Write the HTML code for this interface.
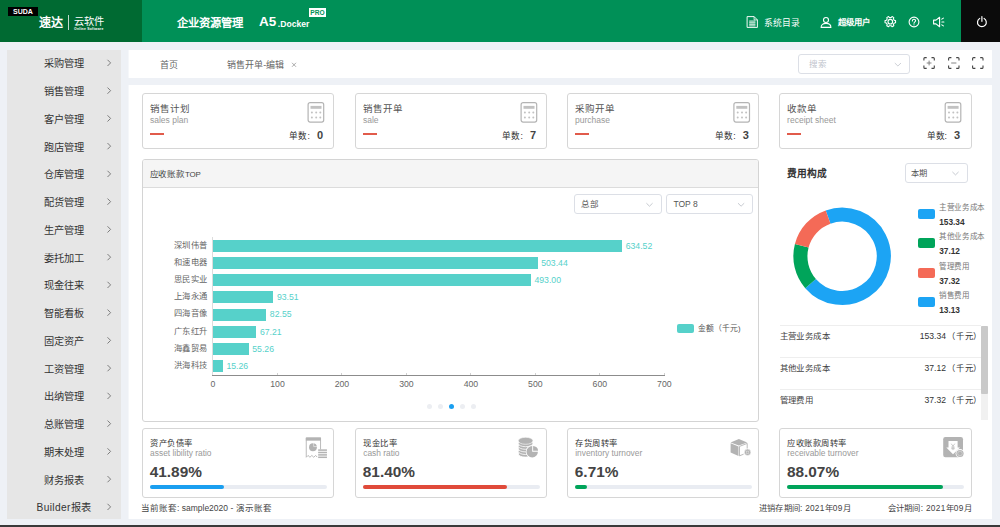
<!DOCTYPE html><html lang="zh-CN"><head><meta charset="utf-8"><title>ERP</title>
<style>html,body{margin:0;padding:0}body{width:1000px;height:527px;position:relative;overflow:hidden;background:#eef1f6;font-family:"Liberation Sans", sans-serif;}div{box-sizing:border-box}</style></head><body>
<div style="position:absolute;left:0.00px;top:0.00px;width:1000.00px;height:42.00px;background:#009057;"></div>
<div style="position:absolute;left:0.00px;top:0.00px;width:142.00px;height:42.00px;background:#006a32;"></div>
<div style="position:absolute;left:961.00px;top:0.00px;width:39.00px;height:42.00px;background:#0b0b0b;"></div>
<div style="position:absolute;left:8.00px;top:7.00px;width:30.00px;height:9.00px;background:#000;"></div>
<div style="position:absolute;top:6.70px;height:9.8px;line-height:9.8px;font-size:7px;color:#fff;white-space:nowrap;font-weight:bold;left:8.00px;width:30px;text-align:center;">SUDA</div>
<div style="position:absolute;top:14.80px;height:16.8px;line-height:16.8px;font-size:12px;color:#fff;white-space:nowrap;font-weight:bold;left:39.00px;">速达</div>
<div style="position:absolute;left:68.00px;top:15.00px;width:1.00px;height:15.00px;background:rgba(255,255,255,.75);"></div>
<div style="position:absolute;top:14.56px;height:14.28px;line-height:14.28px;font-size:10.2px;color:#fff;white-space:nowrap;left:74.00px;">云软件</div>
<div style="position:absolute;top:26.62px;height:4.76px;line-height:4.76px;font-size:3.4px;color:#fff;white-space:nowrap;font-weight:bold;left:74.00px;letter-spacing:.25px;">Online Software</div>
<div style="position:absolute;top:15.69px;height:15.82px;line-height:15.82px;font-size:11.3px;color:#fff;white-space:nowrap;font-weight:bold;left:176.50px;">企业资源管理</div>
<div style="position:absolute;top:13.15px;height:18.9px;line-height:18.9px;font-size:13.5px;color:#fff;white-space:nowrap;font-weight:bold;left:259.00px;">A5</div>
<div style="position:absolute;top:18.38px;height:12.04px;line-height:12.04px;font-size:8.6px;color:#fff;white-space:nowrap;font-weight:bold;left:277.80px;">.Docker</div>
<div style="position:absolute;left:309.00px;top:7.60px;width:17.00px;height:9.40px;background:#fff;"></div>
<div style="position:absolute;top:7.88px;height:9.24px;line-height:9.24px;font-size:6.6px;color:#009057;white-space:nowrap;font-weight:bold;left:309.00px;width:17px;text-align:center;">PRO</div>
<svg style="position:absolute;left:746px;top:16px;overflow:visible" width="13" height="13" viewBox="0 0 13 13"><g transform="translate(0.5 0)"><path d="M0.6 0.6 H7.6 L10.9 3.9 V11.4 H0.6 Z" stroke="#fff" fill="none" stroke-width="0.95" stroke-linejoin="round"/><path d="M7.6 0.6 V3.9 H10.9" stroke="#fff" fill="none" stroke-width="0.8"/><rect x="2.7" y="4.6" width="6.2" height="5.4" fill="rgba(255,255,255,.35)"/><path d="M2.7 5 H8.9 M2.7 6.7 H8.9 M2.7 8.4 H8.9 M2.7 10 H8.9" stroke="#fff" stroke-width="0.6"/></g></svg>
<div style="position:absolute;top:16.74px;height:12.32px;line-height:12.32px;font-size:8.8px;color:#fff;white-space:nowrap;left:764.00px;">系统目录</div>
<svg style="position:absolute;left:820px;top:17px;overflow:visible" width="12" height="12" viewBox="0 0 12 12"><g transform="translate(0.5 0)"><circle cx="5.5" cy="3" r="2.5" stroke="#fff" fill="none" stroke-width="1.1" stroke-linecap="round" stroke-linejoin="round"/><path d="M0.6 10.4 C0.6 7.6 2.6 6.4 5.5 6.4 C8.4 6.4 10.4 7.6 10.4 10.4 Z" stroke="#fff" fill="none" stroke-width="1.1" stroke-linecap="round" stroke-linejoin="round"/></g></svg>
<div style="position:absolute;top:17.02px;height:11.76px;line-height:11.76px;font-size:8.4px;color:#fff;white-space:nowrap;font-weight:bold;left:838.20px;">超级用户</div>
<svg style="position:absolute;left:884px;top:15px;overflow:visible" width="13" height="13" viewBox="0 0 13 13"><g transform="translate(0.45 0.8)"><path d="M6.64 1.78 L7.59 0.79 L9.36 1.81 L8.98 3.13 L9.77 4.50 L11.10 4.83 L11.10 6.87 L9.77 7.20 L8.98 8.57 L9.36 9.89 L7.59 10.91 L6.64 9.92 L5.06 9.92 L4.11 10.91 L2.34 9.89 L2.72 8.57 L1.93 7.20 L0.60 6.87 L0.60 4.83 L1.93 4.50 L2.72 3.13 L2.34 1.81 L4.11 0.79 L5.06 1.78 Z" stroke="#fff" fill="none" stroke-width="1.1" stroke-linecap="round" stroke-linejoin="round"/><circle cx="5.85" cy="5.85" r="2.3" stroke="#fff" fill="none" stroke-width="1.1" stroke-linecap="round" stroke-linejoin="round"/></g></svg>
<svg style="position:absolute;left:908px;top:16px;overflow:visible" width="12" height="12" viewBox="0 0 12 12"><g transform="translate(0.5 0.5)"><circle cx="5.5" cy="5.5" r="4.9" stroke="#fff" fill="none" stroke-width="1.1" stroke-linecap="round" stroke-linejoin="round"/><path d="M3.9 4.4 C3.9 3.3 4.6 2.8 5.5 2.8 C6.4 2.8 7.1 3.4 7.1 4.3 C7.1 5.4 5.5 5.5 5.5 6.8" stroke="#fff" fill="none" stroke-width="1.1" stroke-linecap="round" stroke-linejoin="round"/><circle cx="5.5" cy="8.3" r="0.6" fill="#fff"/></g></svg>
<svg style="position:absolute;left:933px;top:16px;overflow:visible" width="13" height="12" viewBox="0 0 13 12"><g transform="translate(0 0.5)"><path d="M0.6 3.6 H3 L6.6 0.8 V10.2 L3 7.4 H0.6 Z" stroke="#fff" fill="none" stroke-width="1.1" stroke-linecap="round" stroke-linejoin="round"/><path d="M8.8 2.6 L10.4 1.6 M8.9 5.5 H10.9 M8.8 8.4 L10.4 9.4" stroke="#fff" fill="none" stroke-width="1.1" stroke-linecap="round" stroke-linejoin="round"/></g></svg>
<svg style="position:absolute;left:976px;top:15px;overflow:visible" width="12" height="12" viewBox="0 0 12 12"><g transform="translate(0.4 0.9)"><path d="M3.3 2.6 A4.4 4.4 0 1 0 7.7 2.6" stroke="#fff" fill="none" stroke-width="1.2" stroke-linecap="round"/><path d="M5.5 0.8 V5.4" stroke="#fff" stroke-width="1.2" stroke-linecap="round"/></g></svg>
<div style="position:absolute;left:7.00px;top:50.00px;width:114.00px;height:469.00px;background:#e6e6e6;"></div>
<div style="position:absolute;top:57.36px;height:14.28px;line-height:14.28px;font-size:10.2px;color:#333;white-space:nowrap;left:9.00px;width:110px;text-align:center;">采购管理</div>
<svg style="position:absolute;left:106px;top:59px;overflow:visible" width="6" height="9" viewBox="0 0 6 9"><g transform="translate(0.9 0.2)"><path d="M0.6 0.6 L3.7 3.7 L0.6 6.8" stroke="#777" fill="none" stroke-width="0.95"/></g></svg>
<div style="position:absolute;top:85.11px;height:14.28px;line-height:14.28px;font-size:10.2px;color:#333;white-space:nowrap;left:9.00px;width:110px;text-align:center;">销售管理</div>
<svg style="position:absolute;left:106px;top:86px;overflow:visible" width="6" height="9" viewBox="0 0 6 9"><g transform="translate(0.9 0.95)"><path d="M0.6 0.6 L3.7 3.7 L0.6 6.8" stroke="#777" fill="none" stroke-width="0.95"/></g></svg>
<div style="position:absolute;top:112.86px;height:14.28px;line-height:14.28px;font-size:10.2px;color:#333;white-space:nowrap;left:9.00px;width:110px;text-align:center;">客户管理</div>
<svg style="position:absolute;left:106px;top:114px;overflow:visible" width="6" height="9" viewBox="0 0 6 9"><g transform="translate(0.9 0.7)"><path d="M0.6 0.6 L3.7 3.7 L0.6 6.8" stroke="#777" fill="none" stroke-width="0.95"/></g></svg>
<div style="position:absolute;top:140.61px;height:14.28px;line-height:14.28px;font-size:10.2px;color:#333;white-space:nowrap;left:9.00px;width:110px;text-align:center;">跑店管理</div>
<svg style="position:absolute;left:106px;top:142px;overflow:visible" width="6" height="9" viewBox="0 0 6 9"><g transform="translate(0.9 0.45)"><path d="M0.6 0.6 L3.7 3.7 L0.6 6.8" stroke="#777" fill="none" stroke-width="0.95"/></g></svg>
<div style="position:absolute;top:168.36px;height:14.28px;line-height:14.28px;font-size:10.2px;color:#333;white-space:nowrap;left:9.00px;width:110px;text-align:center;">仓库管理</div>
<svg style="position:absolute;left:106px;top:170px;overflow:visible" width="6" height="9" viewBox="0 0 6 9"><g transform="translate(0.9 0.2)"><path d="M0.6 0.6 L3.7 3.7 L0.6 6.8" stroke="#777" fill="none" stroke-width="0.95"/></g></svg>
<div style="position:absolute;top:196.11px;height:14.28px;line-height:14.28px;font-size:10.2px;color:#333;white-space:nowrap;left:9.00px;width:110px;text-align:center;">配货管理</div>
<svg style="position:absolute;left:106px;top:197px;overflow:visible" width="6" height="9" viewBox="0 0 6 9"><g transform="translate(0.9 0.95)"><path d="M0.6 0.6 L3.7 3.7 L0.6 6.8" stroke="#777" fill="none" stroke-width="0.95"/></g></svg>
<div style="position:absolute;top:223.86px;height:14.28px;line-height:14.28px;font-size:10.2px;color:#333;white-space:nowrap;left:9.00px;width:110px;text-align:center;">生产管理</div>
<svg style="position:absolute;left:106px;top:225px;overflow:visible" width="6" height="9" viewBox="0 0 6 9"><g transform="translate(0.9 0.7)"><path d="M0.6 0.6 L3.7 3.7 L0.6 6.8" stroke="#777" fill="none" stroke-width="0.95"/></g></svg>
<div style="position:absolute;top:251.61px;height:14.28px;line-height:14.28px;font-size:10.2px;color:#333;white-space:nowrap;left:9.00px;width:110px;text-align:center;">委托加工</div>
<svg style="position:absolute;left:106px;top:253px;overflow:visible" width="6" height="9" viewBox="0 0 6 9"><g transform="translate(0.9 0.45)"><path d="M0.6 0.6 L3.7 3.7 L0.6 6.8" stroke="#777" fill="none" stroke-width="0.95"/></g></svg>
<div style="position:absolute;top:279.36px;height:14.28px;line-height:14.28px;font-size:10.2px;color:#333;white-space:nowrap;left:9.00px;width:110px;text-align:center;">现金往来</div>
<svg style="position:absolute;left:106px;top:281px;overflow:visible" width="6" height="9" viewBox="0 0 6 9"><g transform="translate(0.9 0.2)"><path d="M0.6 0.6 L3.7 3.7 L0.6 6.8" stroke="#777" fill="none" stroke-width="0.95"/></g></svg>
<div style="position:absolute;top:307.11px;height:14.28px;line-height:14.28px;font-size:10.2px;color:#333;white-space:nowrap;left:9.00px;width:110px;text-align:center;">智能看板</div>
<svg style="position:absolute;left:106px;top:308px;overflow:visible" width="6" height="9" viewBox="0 0 6 9"><g transform="translate(0.9 0.95)"><path d="M0.6 0.6 L3.7 3.7 L0.6 6.8" stroke="#777" fill="none" stroke-width="0.95"/></g></svg>
<div style="position:absolute;top:334.86px;height:14.28px;line-height:14.28px;font-size:10.2px;color:#333;white-space:nowrap;left:9.00px;width:110px;text-align:center;">固定资产</div>
<svg style="position:absolute;left:106px;top:336px;overflow:visible" width="6" height="9" viewBox="0 0 6 9"><g transform="translate(0.9 0.7)"><path d="M0.6 0.6 L3.7 3.7 L0.6 6.8" stroke="#777" fill="none" stroke-width="0.95"/></g></svg>
<div style="position:absolute;top:362.61px;height:14.28px;line-height:14.28px;font-size:10.2px;color:#333;white-space:nowrap;left:9.00px;width:110px;text-align:center;">工资管理</div>
<svg style="position:absolute;left:106px;top:364px;overflow:visible" width="6" height="9" viewBox="0 0 6 9"><g transform="translate(0.9 0.45)"><path d="M0.6 0.6 L3.7 3.7 L0.6 6.8" stroke="#777" fill="none" stroke-width="0.95"/></g></svg>
<div style="position:absolute;top:390.36px;height:14.28px;line-height:14.28px;font-size:10.2px;color:#333;white-space:nowrap;left:9.00px;width:110px;text-align:center;">出纳管理</div>
<svg style="position:absolute;left:106px;top:392px;overflow:visible" width="6" height="9" viewBox="0 0 6 9"><g transform="translate(0.9 0.2)"><path d="M0.6 0.6 L3.7 3.7 L0.6 6.8" stroke="#777" fill="none" stroke-width="0.95"/></g></svg>
<div style="position:absolute;top:418.11px;height:14.28px;line-height:14.28px;font-size:10.2px;color:#333;white-space:nowrap;left:9.00px;width:110px;text-align:center;">总账管理</div>
<svg style="position:absolute;left:106px;top:419px;overflow:visible" width="6" height="9" viewBox="0 0 6 9"><g transform="translate(0.9 0.95)"><path d="M0.6 0.6 L3.7 3.7 L0.6 6.8" stroke="#777" fill="none" stroke-width="0.95"/></g></svg>
<div style="position:absolute;top:445.86px;height:14.28px;line-height:14.28px;font-size:10.2px;color:#333;white-space:nowrap;left:9.00px;width:110px;text-align:center;">期末处理</div>
<svg style="position:absolute;left:106px;top:447px;overflow:visible" width="6" height="9" viewBox="0 0 6 9"><g transform="translate(0.9 0.7)"><path d="M0.6 0.6 L3.7 3.7 L0.6 6.8" stroke="#777" fill="none" stroke-width="0.95"/></g></svg>
<div style="position:absolute;top:473.61px;height:14.28px;line-height:14.28px;font-size:10.2px;color:#333;white-space:nowrap;left:9.00px;width:110px;text-align:center;">财务报表</div>
<svg style="position:absolute;left:106px;top:475px;overflow:visible" width="6" height="9" viewBox="0 0 6 9"><g transform="translate(0.9 0.45)"><path d="M0.6 0.6 L3.7 3.7 L0.6 6.8" stroke="#777" fill="none" stroke-width="0.95"/></g></svg>
<div style="position:absolute;top:501.36px;height:14.28px;line-height:14.28px;font-size:10.2px;color:#333;white-space:nowrap;left:9.00px;width:110px;text-align:center;letter-spacing:.35px;">Builder报表</div>
<svg style="position:absolute;left:106px;top:503px;overflow:visible" width="6" height="9" viewBox="0 0 6 9"><g transform="translate(0.9 0.2)"><path d="M0.6 0.6 L3.7 3.7 L0.6 6.8" stroke="#777" fill="none" stroke-width="0.95"/></g></svg>
<div style="position:absolute;left:128.00px;top:50.00px;width:1.00px;height:28.00px;background:#f5f7fa;"></div>
<div style="position:absolute;left:129.00px;top:50.00px;width:863.00px;height:28.00px;background:#fff;"></div>
<div style="position:absolute;top:59.30px;height:12.6px;line-height:12.6px;font-size:9px;color:#666;white-space:nowrap;left:160.00px;">首页</div>
<div style="position:absolute;top:59.30px;height:12.6px;line-height:12.6px;font-size:9px;color:#666;white-space:nowrap;left:227.30px;">销售开单-编辑</div>
<svg style="position:absolute;left:291px;top:62px;overflow:visible" width="6" height="6" viewBox="0 0 6 6"><g transform="translate(0.5 0.3)"><path d="M0.5 0.5 L4.5 4.5 M4.5 0.5 L0.5 4.5" stroke="#888" stroke-width="0.7" fill="none"/></g></svg>
<div style="position:absolute;left:798.00px;top:54.00px;width:112.00px;height:20.00px;background:#fff;border:1px solid #dcdfe6;border-radius:3px;"></div>
<div style="position:absolute;top:58.85px;height:11.9px;line-height:11.9px;font-size:8.5px;color:#c0c4cc;white-space:nowrap;left:808.50px;">搜索</div>
<svg style="position:absolute;left:894px;top:62px;overflow:visible" width="8" height="5" viewBox="0 0 8 5"><g transform="translate(0.4 0.6)"><path d="M0.4 0.4 L3.5 3.4 L6.6 0.4" stroke="#c0c4cc" fill="none" stroke-width="0.8"/></g></svg>
<svg style="position:absolute;left:923px;top:57px;overflow:visible" width="13" height="13" viewBox="0 0 13 13"><g transform="translate(0.3 0)"><path d="M0.6 3.4 V1.6 Q0.6 0.6 1.6 0.6 H3.4 M8.2 0.6 H10 Q11 0.6 11 1.6 V3.4 M11 8.6 V10.4 Q11 11.4 10 11.4 H8.2 M3.4 11.4 H1.6 Q0.6 11.4 0.6 10.4 V8.6" stroke="#444" fill="none" stroke-width="1.1"/><path d="M3.4 6 H8.2 M5.8 3.6 V8.4" stroke="#777" fill="none" stroke-width="0.9"/></g></svg>
<svg style="position:absolute;left:948px;top:57px;overflow:visible" width="13" height="13" viewBox="0 0 13 13"><g transform="translate(0 0)"><path d="M0.6 3.4 V1.6 Q0.6 0.6 1.6 0.6 H3.4 M8.2 0.6 H10 Q11 0.6 11 1.6 V3.4 M11 8.6 V10.4 Q11 11.4 10 11.4 H8.2 M3.4 11.4 H1.6 Q0.6 11.4 0.6 10.4 V8.6" stroke="#444" fill="none" stroke-width="1.1"/><path d="M3.2 6 H8.4" stroke="#777" fill="none" stroke-width="0.9"/></g></svg>
<svg style="position:absolute;left:972px;top:57px;overflow:visible" width="13" height="13" viewBox="0 0 13 13"><g transform="translate(0 0)"><path d="M0.6 3.4 V1.6 Q0.6 0.6 1.6 0.6 H3.4 M8.2 0.6 H10 Q11 0.6 11 1.6 V3.4 M11 8.6 V10.4 Q11 11.4 10 11.4 H8.2 M3.4 11.4 H1.6 Q0.6 11.4 0.6 10.4 V8.6" stroke="#444" fill="none" stroke-width="1.1"/></g></svg>
<div style="position:absolute;left:128.00px;top:85.00px;width:1.00px;height:434.00px;background:#f5f7fa;"></div>
<div style="position:absolute;left:129.00px;top:85.00px;width:863.00px;height:434.00px;background:#fff;"></div>
<div style="position:absolute;left:142.00px;top:93.00px;width:192.00px;height:56.00px;background:#fff;border:1px solid #d6d6d6;border-radius:3px;"></div>
<div style="position:absolute;top:101.85px;height:13.3px;line-height:13.3px;font-size:9.5px;color:#555;white-space:nowrap;left:150.00px;">销售计划</div>
<div style="position:absolute;top:115.25px;height:11.9px;line-height:11.9px;font-size:8.5px;color:#999;white-space:nowrap;left:150.00px;">sales plan</div>
<div style="position:absolute;left:150.00px;top:133.00px;width:14.00px;height:2.00px;background:#e15b4b;"></div>
<svg style="position:absolute;left:307px;top:102px;overflow:visible" width="18" height="22" viewBox="0 0 18 22"><g transform="translate(0.5 0.1)"><rect x="0.6" y="0.6" width="15.6" height="19.4" rx="2" fill="#fff" stroke="#b4b4b4" stroke-width="1.2"/><rect x="3" y="3.8" width="11" height="2.9" fill="#c2c2c2"/><circle cx="4.4" cy="10.5" r="1" fill="#c2c2c2"/><circle cx="4.4" cy="15.4" r="1" fill="#c2c2c2"/><circle cx="8.7" cy="10.5" r="1" fill="#c2c2c2"/><circle cx="8.7" cy="15.4" r="1" fill="#c2c2c2"/><circle cx="12.8" cy="10.5" r="1" fill="#c2c2c2"/><circle cx="12.8" cy="15.4" r="1" fill="#c2c2c2"/></g></svg>
<div style="position:absolute;top:130.38px;height:12.04px;line-height:12.04px;font-size:8.6px;color:#333;white-space:nowrap;right:690.20px;text-align:right;">单数:</div>
<div style="position:absolute;top:128.20px;height:15.4px;line-height:15.4px;font-size:11px;color:#444;white-space:nowrap;font-weight:bold;left:317.00px;">0</div>
<div style="position:absolute;left:355.00px;top:93.00px;width:192.00px;height:56.00px;background:#fff;border:1px solid #d6d6d6;border-radius:3px;"></div>
<div style="position:absolute;top:101.85px;height:13.3px;line-height:13.3px;font-size:9.5px;color:#555;white-space:nowrap;left:363.00px;">销售开单</div>
<div style="position:absolute;top:115.25px;height:11.9px;line-height:11.9px;font-size:8.5px;color:#999;white-space:nowrap;left:363.00px;">sale</div>
<div style="position:absolute;left:363.00px;top:133.00px;width:14.00px;height:2.00px;background:#e15b4b;"></div>
<svg style="position:absolute;left:520px;top:102px;overflow:visible" width="18" height="22" viewBox="0 0 18 22"><g transform="translate(0.5 0.1)"><rect x="0.6" y="0.6" width="15.6" height="19.4" rx="2" fill="#fff" stroke="#b4b4b4" stroke-width="1.2"/><rect x="3" y="3.8" width="11" height="2.9" fill="#c2c2c2"/><circle cx="4.4" cy="10.5" r="1" fill="#c2c2c2"/><circle cx="4.4" cy="15.4" r="1" fill="#c2c2c2"/><circle cx="8.7" cy="10.5" r="1" fill="#c2c2c2"/><circle cx="8.7" cy="15.4" r="1" fill="#c2c2c2"/><circle cx="12.8" cy="10.5" r="1" fill="#c2c2c2"/><circle cx="12.8" cy="15.4" r="1" fill="#c2c2c2"/></g></svg>
<div style="position:absolute;top:130.38px;height:12.04px;line-height:12.04px;font-size:8.6px;color:#333;white-space:nowrap;right:477.20px;text-align:right;">单数:</div>
<div style="position:absolute;top:128.20px;height:15.4px;line-height:15.4px;font-size:11px;color:#444;white-space:nowrap;font-weight:bold;left:530.00px;">7</div>
<div style="position:absolute;left:567.00px;top:93.00px;width:192.00px;height:56.00px;background:#fff;border:1px solid #d6d6d6;border-radius:3px;"></div>
<div style="position:absolute;top:101.85px;height:13.3px;line-height:13.3px;font-size:9.5px;color:#555;white-space:nowrap;left:575.00px;">采购开单</div>
<div style="position:absolute;top:115.25px;height:11.9px;line-height:11.9px;font-size:8.5px;color:#999;white-space:nowrap;left:575.00px;">purchase</div>
<div style="position:absolute;left:575.00px;top:133.00px;width:14.00px;height:2.00px;background:#e15b4b;"></div>
<svg style="position:absolute;left:733px;top:102px;overflow:visible" width="18" height="22" viewBox="0 0 18 22"><g transform="translate(0.3 0.1)"><rect x="0.6" y="0.6" width="15.6" height="19.4" rx="2" fill="#fff" stroke="#b4b4b4" stroke-width="1.2"/><rect x="3" y="3.8" width="11" height="2.9" fill="#c2c2c2"/><circle cx="4.4" cy="10.5" r="1" fill="#c2c2c2"/><circle cx="4.4" cy="15.4" r="1" fill="#c2c2c2"/><circle cx="8.7" cy="10.5" r="1" fill="#c2c2c2"/><circle cx="8.7" cy="15.4" r="1" fill="#c2c2c2"/><circle cx="12.8" cy="10.5" r="1" fill="#c2c2c2"/><circle cx="12.8" cy="15.4" r="1" fill="#c2c2c2"/></g></svg>
<div style="position:absolute;top:130.38px;height:12.04px;line-height:12.04px;font-size:8.6px;color:#333;white-space:nowrap;right:264.40px;text-align:right;">单数:</div>
<div style="position:absolute;top:128.20px;height:15.4px;line-height:15.4px;font-size:11px;color:#444;white-space:nowrap;font-weight:bold;left:742.80px;">3</div>
<div style="position:absolute;left:779.00px;top:93.00px;width:193.00px;height:56.00px;background:#fff;border:1px solid #d6d6d6;border-radius:3px;"></div>
<div style="position:absolute;top:101.85px;height:13.3px;line-height:13.3px;font-size:9.5px;color:#555;white-space:nowrap;left:787.10px;">收款单</div>
<div style="position:absolute;top:115.25px;height:11.9px;line-height:11.9px;font-size:8.5px;color:#999;white-space:nowrap;left:787.10px;">receipt sheet</div>
<div style="position:absolute;left:787.00px;top:133.00px;width:14.00px;height:2.00px;background:#e15b4b;"></div>
<svg style="position:absolute;left:944px;top:102px;overflow:visible" width="18" height="22" viewBox="0 0 18 22"><g transform="translate(0.6 0.1)"><rect x="0.6" y="0.6" width="15.6" height="19.4" rx="2" fill="#fff" stroke="#b4b4b4" stroke-width="1.2"/><rect x="3" y="3.8" width="11" height="2.9" fill="#c2c2c2"/><circle cx="4.4" cy="10.5" r="1" fill="#c2c2c2"/><circle cx="4.4" cy="15.4" r="1" fill="#c2c2c2"/><circle cx="8.7" cy="10.5" r="1" fill="#c2c2c2"/><circle cx="8.7" cy="15.4" r="1" fill="#c2c2c2"/><circle cx="12.8" cy="10.5" r="1" fill="#c2c2c2"/><circle cx="12.8" cy="15.4" r="1" fill="#c2c2c2"/></g></svg>
<div style="position:absolute;top:130.38px;height:12.04px;line-height:12.04px;font-size:8.6px;color:#333;white-space:nowrap;right:53.10px;text-align:right;">单数:</div>
<div style="position:absolute;top:128.20px;height:15.4px;line-height:15.4px;font-size:11px;color:#444;white-space:nowrap;font-weight:bold;left:954.10px;">3</div>
<div style="position:absolute;left:142.00px;top:159.00px;width:617.00px;height:263.00px;background:#fff;border:1px solid #d4d4d4;border-radius:3px;"></div>
<div style="position:absolute;left:143.00px;top:160.00px;width:615.00px;height:28.00px;background:#f5f5f5;border-bottom:1px solid #dcdcdc;border-radius:2px 2px 0 0;"></div>
<div style="position:absolute;top:168.65px;height:11.9px;line-height:11.9px;font-size:8.5px;color:#444;white-space:nowrap;left:149.60px;letter-spacing:-.15px;">应收账款<span style="font-size:7.9px;letter-spacing:-.2px">TOP</span></div>
<div style="position:absolute;left:574.00px;top:194.00px;width:88.00px;height:20.00px;background:#fff;border:1px solid #dcdfe6;border-radius:3px;"></div>
<div style="position:absolute;top:198.85px;height:11.9px;line-height:11.9px;font-size:8.5px;color:#555;white-space:nowrap;left:580.60px;">总部</div>
<svg style="position:absolute;left:646px;top:202px;overflow:visible" width="8" height="5" viewBox="0 0 8 5"><g transform="translate(0 0.8)"><path d="M0.4 0.4 L3.5 3.4 L6.6 0.4" stroke="#b8bcc4" fill="none" stroke-width="0.8"/></g></svg>
<div style="position:absolute;left:666.00px;top:194.00px;width:87.00px;height:20.00px;background:#fff;border:1px solid #dcdfe6;border-radius:3px;"></div>
<div style="position:absolute;top:198.85px;height:11.9px;line-height:11.9px;font-size:8.5px;color:#555;white-space:nowrap;left:673.40px;">TOP 8</div>
<svg style="position:absolute;left:737px;top:202px;overflow:visible" width="8" height="5" viewBox="0 0 8 5"><g transform="translate(0.6 0.8)"><path d="M0.4 0.4 L3.5 3.4 L6.6 0.4" stroke="#b8bcc4" fill="none" stroke-width="0.8"/></g></svg>
<div style="position:absolute;left:213.00px;top:239.70px;width:409.08px;height:12.00px;background:#56d1ca;"></div>
<div style="position:absolute;top:239.69px;height:11.62px;line-height:11.62px;font-size:8.3px;color:#666;white-space:nowrap;right:792.50px;text-align:right;letter-spacing:.35px;">深圳伟普</div>
<div style="position:absolute;top:239.61px;height:12.18px;line-height:12.18px;font-size:8.7px;color:#56d1ca;white-space:nowrap;left:625.68px;">634.52</div>
<div style="position:absolute;left:213.00px;top:256.90px;width:324.57px;height:12.00px;background:#56d1ca;"></div>
<div style="position:absolute;top:256.89px;height:11.62px;line-height:11.62px;font-size:8.3px;color:#666;white-space:nowrap;right:792.50px;text-align:right;letter-spacing:.35px;">和速电器</div>
<div style="position:absolute;top:256.81px;height:12.18px;line-height:12.18px;font-size:8.7px;color:#56d1ca;white-space:nowrap;left:541.17px;">503.44</div>
<div style="position:absolute;left:213.00px;top:274.10px;width:317.84px;height:12.00px;background:#56d1ca;"></div>
<div style="position:absolute;top:274.09px;height:11.62px;line-height:11.62px;font-size:8.3px;color:#666;white-space:nowrap;right:792.50px;text-align:right;letter-spacing:.35px;">思民实业</div>
<div style="position:absolute;top:274.01px;height:12.18px;line-height:12.18px;font-size:8.7px;color:#56d1ca;white-space:nowrap;left:534.44px;">493.00</div>
<div style="position:absolute;left:213.00px;top:291.30px;width:60.29px;height:12.00px;background:#56d1ca;"></div>
<div style="position:absolute;top:291.29px;height:11.62px;line-height:11.62px;font-size:8.3px;color:#666;white-space:nowrap;right:792.50px;text-align:right;letter-spacing:.35px;">上海永通</div>
<div style="position:absolute;top:291.21px;height:12.18px;line-height:12.18px;font-size:8.7px;color:#56d1ca;white-space:nowrap;left:276.89px;">93.51</div>
<div style="position:absolute;left:213.00px;top:308.50px;width:53.22px;height:12.00px;background:#56d1ca;"></div>
<div style="position:absolute;top:308.49px;height:11.62px;line-height:11.62px;font-size:8.3px;color:#666;white-space:nowrap;right:792.50px;text-align:right;letter-spacing:.35px;">四海音像</div>
<div style="position:absolute;top:308.41px;height:12.18px;line-height:12.18px;font-size:8.7px;color:#56d1ca;white-space:nowrap;left:269.82px;">82.55</div>
<div style="position:absolute;left:213.00px;top:325.70px;width:43.33px;height:12.00px;background:#56d1ca;"></div>
<div style="position:absolute;top:325.69px;height:11.62px;line-height:11.62px;font-size:8.3px;color:#666;white-space:nowrap;right:792.50px;text-align:right;letter-spacing:.35px;">广东红升</div>
<div style="position:absolute;top:325.61px;height:12.18px;line-height:12.18px;font-size:8.7px;color:#56d1ca;white-space:nowrap;left:259.93px;">67.21</div>
<div style="position:absolute;left:213.00px;top:342.90px;width:35.63px;height:12.00px;background:#56d1ca;"></div>
<div style="position:absolute;top:342.89px;height:11.62px;line-height:11.62px;font-size:8.3px;color:#666;white-space:nowrap;right:792.50px;text-align:right;letter-spacing:.35px;">海鑫贸易</div>
<div style="position:absolute;top:342.81px;height:12.18px;line-height:12.18px;font-size:8.7px;color:#56d1ca;white-space:nowrap;left:252.23px;">55.26</div>
<div style="position:absolute;left:213.00px;top:360.10px;width:9.84px;height:12.00px;background:#56d1ca;"></div>
<div style="position:absolute;top:360.09px;height:11.62px;line-height:11.62px;font-size:8.3px;color:#666;white-space:nowrap;right:792.50px;text-align:right;letter-spacing:.35px;">洪海科技</div>
<div style="position:absolute;top:360.01px;height:12.18px;line-height:12.18px;font-size:8.7px;color:#56d1ca;white-space:nowrap;left:226.44px;">15.26</div>
<div style="position:absolute;left:212.00px;top:237.00px;width:1.00px;height:138.00px;background:#dcdcdc;"></div>
<div style="position:absolute;left:212.00px;top:375.00px;width:453.00px;height:1.00px;background:#8c8c8c;"></div>
<div style="position:absolute;top:378.11px;height:12.18px;line-height:12.18px;font-size:8.7px;color:#666;white-space:nowrap;left:193.00px;width:40px;text-align:center;">0</div>
<div style="position:absolute;left:276.97px;top:372.50px;width:1.00px;height:2.50px;background:#d0d0d0;"></div>
<div style="position:absolute;top:378.11px;height:12.18px;line-height:12.18px;font-size:8.7px;color:#666;white-space:nowrap;left:257.47px;width:40px;text-align:center;">100</div>
<div style="position:absolute;left:341.44px;top:372.50px;width:1.00px;height:2.50px;background:#d0d0d0;"></div>
<div style="position:absolute;top:378.11px;height:12.18px;line-height:12.18px;font-size:8.7px;color:#666;white-space:nowrap;left:321.94px;width:40px;text-align:center;">200</div>
<div style="position:absolute;left:405.91px;top:372.50px;width:1.00px;height:2.50px;background:#d0d0d0;"></div>
<div style="position:absolute;top:378.11px;height:12.18px;line-height:12.18px;font-size:8.7px;color:#666;white-space:nowrap;left:386.41px;width:40px;text-align:center;">300</div>
<div style="position:absolute;left:470.39px;top:372.50px;width:1.00px;height:2.50px;background:#d0d0d0;"></div>
<div style="position:absolute;top:378.11px;height:12.18px;line-height:12.18px;font-size:8.7px;color:#666;white-space:nowrap;left:450.89px;width:40px;text-align:center;">400</div>
<div style="position:absolute;left:534.86px;top:372.50px;width:1.00px;height:2.50px;background:#d0d0d0;"></div>
<div style="position:absolute;top:378.11px;height:12.18px;line-height:12.18px;font-size:8.7px;color:#666;white-space:nowrap;left:515.36px;width:40px;text-align:center;">500</div>
<div style="position:absolute;left:599.33px;top:372.50px;width:1.00px;height:2.50px;background:#d0d0d0;"></div>
<div style="position:absolute;top:378.11px;height:12.18px;line-height:12.18px;font-size:8.7px;color:#666;white-space:nowrap;left:579.83px;width:40px;text-align:center;">600</div>
<div style="position:absolute;left:663.80px;top:372.50px;width:1.00px;height:2.50px;background:#d0d0d0;"></div>
<div style="position:absolute;top:378.11px;height:12.18px;line-height:12.18px;font-size:8.7px;color:#666;white-space:nowrap;left:644.30px;width:40px;text-align:center;">700</div>
<div style="position:absolute;left:677.00px;top:323.50px;width:16.50px;height:9.50px;background:#56d1ca;border-radius:2px;"></div>
<div style="position:absolute;top:324.34px;height:10.92px;line-height:10.92px;font-size:7.8px;color:#555;white-space:nowrap;left:698.00px;">金额（千元)</div>
<div style="position:absolute;left:426.90px;top:404.00px;width:5.2px;height:5.2px;border-radius:50%;background:#eceef2"></div>
<div style="position:absolute;left:437.90px;top:404.00px;width:5.2px;height:5.2px;border-radius:50%;background:#eceef2"></div>
<div style="position:absolute;left:448.90px;top:404.00px;width:5.2px;height:5.2px;border-radius:50%;background:#1a9ff0"></div>
<div style="position:absolute;left:459.90px;top:404.00px;width:5.2px;height:5.2px;border-radius:50%;background:#eceef2"></div>
<div style="position:absolute;left:470.90px;top:404.00px;width:5.2px;height:5.2px;border-radius:50%;background:#eceef2"></div>
<div style="position:absolute;top:166.61px;height:13.58px;line-height:13.58px;font-size:9.7px;color:#333;white-space:nowrap;font-weight:bold;left:786.80px;">费用构成</div>
<div style="position:absolute;left:905.00px;top:163.00px;width:63.00px;height:20.00px;background:#fff;border:1px solid #dcdfe6;border-radius:3px;"></div>
<div style="position:absolute;top:167.59px;height:11.62px;line-height:11.62px;font-size:8.3px;color:#555;white-space:nowrap;left:911.00px;">本期</div>
<svg style="position:absolute;left:952px;top:171px;overflow:visible" width="8" height="5" viewBox="0 0 8 5"><g transform="translate(0 0.5)"><path d="M0.4 0.4 L3.5 3.4 L6.6 0.4" stroke="#b8bcc4" fill="none" stroke-width="0.8"/></g></svg>
<svg style="position:absolute;left:770px;top:185px;overflow:visible" width="151" height="141" viewBox="0 0 151 141"><g transform="translate(0 0)"><path d="M58.10 32.02 A41.7 41.7 0 1 1 40.56 98.58" stroke="#1ca4f4" stroke-width="14.1" fill="none"/><path d="M40.56 98.58 A41.7 41.7 0 0 1 31.75 60.78" stroke="#00a45a" stroke-width="14.1" fill="none"/><path d="M31.75 60.78 A41.7 41.7 0 0 1 58.10 32.02" stroke="#f46a57" stroke-width="14.1" fill="none"/></g></svg>
<div style="position:absolute;left:918.00px;top:208.90px;width:16.70px;height:9.80px;background:#1ca4f4;border-radius:2px;"></div>
<div style="position:absolute;top:202.75px;height:10.5px;line-height:10.5px;font-size:7.5px;color:#777;white-space:nowrap;left:939.20px;letter-spacing:.6px;">主营业务成本</div>
<div style="position:absolute;top:216.59px;height:11.62px;line-height:11.62px;font-size:8.3px;color:#333;white-space:nowrap;font-weight:bold;left:939.20px;">153.34</div>
<div style="position:absolute;left:918.00px;top:238.40px;width:16.70px;height:9.80px;background:#00a45a;border-radius:2px;"></div>
<div style="position:absolute;top:232.25px;height:10.5px;line-height:10.5px;font-size:7.5px;color:#777;white-space:nowrap;left:939.20px;letter-spacing:.6px;">其他业务成本</div>
<div style="position:absolute;top:246.09px;height:11.62px;line-height:11.62px;font-size:8.3px;color:#333;white-space:nowrap;font-weight:bold;left:939.20px;">37.12</div>
<div style="position:absolute;left:918.00px;top:267.90px;width:16.70px;height:9.80px;background:#f46a57;border-radius:2px;"></div>
<div style="position:absolute;top:261.75px;height:10.5px;line-height:10.5px;font-size:7.5px;color:#777;white-space:nowrap;left:939.20px;letter-spacing:.6px;">管理费用</div>
<div style="position:absolute;top:275.59px;height:11.62px;line-height:11.62px;font-size:8.3px;color:#333;white-space:nowrap;font-weight:bold;left:939.20px;">37.32</div>
<div style="position:absolute;left:918.00px;top:297.40px;width:16.70px;height:9.80px;background:#1ca4f4;border-radius:2px;"></div>
<div style="position:absolute;top:291.25px;height:10.5px;line-height:10.5px;font-size:7.5px;color:#777;white-space:nowrap;left:939.20px;letter-spacing:.6px;">销售费用</div>
<div style="position:absolute;top:305.09px;height:11.62px;line-height:11.62px;font-size:8.3px;color:#333;white-space:nowrap;font-weight:bold;left:939.20px;">13.13</div>
<div style="position:absolute;left:780.00px;top:325.00px;width:201.00px;height:1.00px;background:#eeeeee;"></div>
<div style="position:absolute;top:330.58px;height:11.83px;line-height:11.83px;font-size:8.45px;color:#444;white-space:nowrap;left:779.70px;letter-spacing:.4px;">主营业务成本</div>
<div style="position:absolute;top:330.48px;height:12.04px;line-height:12.04px;font-size:8.6px;color:#333;white-space:nowrap;right:54.00px;text-align:right;">153.34</div>
<div style="position:absolute;top:330.69px;height:11.62px;line-height:11.62px;font-size:8.3px;color:#333;white-space:nowrap;left:947.40px;letter-spacing:.6px;">（千元）</div>
<div style="position:absolute;left:780.00px;top:357.00px;width:201.00px;height:1.00px;background:#eeeeee;"></div>
<div style="position:absolute;top:362.58px;height:11.83px;line-height:11.83px;font-size:8.45px;color:#444;white-space:nowrap;left:779.70px;letter-spacing:.4px;">其他业务成本</div>
<div style="position:absolute;top:362.48px;height:12.04px;line-height:12.04px;font-size:8.6px;color:#333;white-space:nowrap;right:54.00px;text-align:right;">37.12</div>
<div style="position:absolute;top:362.69px;height:11.62px;line-height:11.62px;font-size:8.3px;color:#333;white-space:nowrap;left:947.40px;letter-spacing:.6px;">（千元）</div>
<div style="position:absolute;left:780.00px;top:389.00px;width:201.00px;height:1.00px;background:#eeeeee;"></div>
<div style="position:absolute;top:394.58px;height:11.83px;line-height:11.83px;font-size:8.45px;color:#444;white-space:nowrap;left:779.70px;letter-spacing:.4px;">管理费用</div>
<div style="position:absolute;top:394.48px;height:12.04px;line-height:12.04px;font-size:8.6px;color:#333;white-space:nowrap;right:54.00px;text-align:right;">37.32</div>
<div style="position:absolute;top:394.69px;height:11.62px;line-height:11.62px;font-size:8.3px;color:#333;white-space:nowrap;left:947.40px;letter-spacing:.6px;">（千元）</div>
<div style="position:absolute;left:981.00px;top:326.00px;width:7.00px;height:94.00px;background:#f1f1f1;"></div>
<div style="position:absolute;left:981.00px;top:326.00px;width:7.00px;height:67.70px;background:#c9c9c9;border-radius:1px;"></div>
<div style="position:absolute;left:142.00px;top:428.00px;width:192.00px;height:70.00px;background:#fff;border:1px solid #d6d6d6;border-radius:3px;"></div>
<div style="position:absolute;top:437.79px;height:11.62px;line-height:11.62px;font-size:8.3px;color:#333;white-space:nowrap;left:150.10px;letter-spacing:.5px;">资产负债率</div>
<div style="position:absolute;top:447.52px;height:11.76px;line-height:11.76px;font-size:8.4px;color:#999;white-space:nowrap;left:150.10px;">asset libility ratio</div>
<div style="position:absolute;top:460.82px;height:21.56px;line-height:21.56px;font-size:15.4px;color:#444;white-space:nowrap;font-weight:bold;left:149.70px;">41.89%</div>
<div style="position:absolute;left:150.30px;top:484.50px;width:176.30px;height:4.10px;background:#e9ecf2;border-radius:2px;"></div>
<div style="position:absolute;left:150.30px;top:484.50px;width:73.85px;height:4.10px;background:#1a9ff0;border-radius:2px;"></div>
<svg style="position:absolute;left:305px;top:437px;overflow:visible" width="23" height="22" viewBox="0 0 23 22"><g transform="translate(0.75 0.45)"><path d="M0.5 0.5 H14.8 V12 M0.5 0.5 V19.8 L2.3 18 L4.2 19.8 L6.1 18 L8 19.8 L9.9 18 L11.4 19.6" stroke="#b3b3b3" fill="none" stroke-width="0.9"/><rect x="0.1" y="0.1" width="15.1" height="3.1" fill="#b3b3b3"/><circle cx="7.2" cy="9.8" r="3.9" fill="#b3b3b3"/><path d="M7.9 9.1 V5.4 M7.9 9.1 H11.4" fill="none" stroke="#f4f4f4" stroke-width="0.6"/><rect x="12.4" y="11.9" width="8.8" height="1.5" fill="#b3b3b3"/><rect x="12.4" y="14.3" width="8.8" height="1.5" fill="#b3b3b3"/><rect x="12.4" y="16.7" width="8.8" height="1.5" fill="#b3b3b3"/><rect x="12.4" y="19.1" width="8.8" height="1.5" fill="#b3b3b3"/></g></svg>
<div style="position:absolute;left:355.00px;top:428.00px;width:192.00px;height:70.00px;background:#fff;border:1px solid #d6d6d6;border-radius:3px;"></div>
<div style="position:absolute;top:437.79px;height:11.62px;line-height:11.62px;font-size:8.3px;color:#333;white-space:nowrap;left:363.20px;letter-spacing:.5px;">现金比率</div>
<div style="position:absolute;top:447.52px;height:11.76px;line-height:11.76px;font-size:8.4px;color:#999;white-space:nowrap;left:363.20px;">cash ratio</div>
<div style="position:absolute;top:460.82px;height:21.56px;line-height:21.56px;font-size:15.4px;color:#444;white-space:nowrap;font-weight:bold;left:362.80px;">81.40%</div>
<div style="position:absolute;left:363.30px;top:484.50px;width:176.30px;height:4.10px;background:#e9ecf2;border-radius:2px;"></div>
<div style="position:absolute;left:363.30px;top:484.50px;width:143.51px;height:4.10px;background:#e04a3a;border-radius:2px;"></div>
<svg style="position:absolute;left:518px;top:437px;overflow:visible" width="22" height="22" viewBox="0 0 22 22"><g transform="translate(0.2 0.5)"><ellipse cx="7.4" cy="16.50" rx="7.3" ry="3.1" fill="#b3b3b3" stroke="#fff" stroke-width="0.8"/><ellipse cx="7.4" cy="13.90" rx="7.3" ry="3.1" fill="#b3b3b3" stroke="#fff" stroke-width="0.8"/><ellipse cx="7.4" cy="11.30" rx="7.3" ry="3.1" fill="#b3b3b3" stroke="#fff" stroke-width="0.8"/><ellipse cx="7.4" cy="8.70" rx="7.3" ry="3.1" fill="#b3b3b3" stroke="#fff" stroke-width="0.8"/><ellipse cx="7.4" cy="6.10" rx="7.3" ry="3.1" fill="#b3b3b3" stroke="#fff" stroke-width="0.8"/><ellipse cx="7.4" cy="3.3" rx="7.4" ry="3.5" fill="#b3b3b3" stroke="#fff" stroke-width="0.6"/><circle cx="14" cy="14.2" r="6.5" fill="#fff"/><path d="M14 14.2 V8.5 A5.7 5.7 0 1 0 19.7 14.2 Z" fill="#b3b3b3"/><path d="M14.9 13.3 V8.4 A5.1 5.1 0 0 1 19.9 13.3 Z" fill="#b3b3b3"/></g></svg>
<div style="position:absolute;left:567.00px;top:428.00px;width:192.00px;height:70.00px;background:#fff;border:1px solid #d6d6d6;border-radius:3px;"></div>
<div style="position:absolute;top:437.79px;height:11.62px;line-height:11.62px;font-size:8.3px;color:#333;white-space:nowrap;left:575.20px;letter-spacing:.5px;">存货周转率</div>
<div style="position:absolute;top:447.52px;height:11.76px;line-height:11.76px;font-size:8.4px;color:#999;white-space:nowrap;left:575.20px;">inventory turnover</div>
<div style="position:absolute;top:460.82px;height:21.56px;line-height:21.56px;font-size:15.4px;color:#444;white-space:nowrap;font-weight:bold;left:574.80px;">6.71%</div>
<div style="position:absolute;left:575.30px;top:484.50px;width:176.30px;height:4.10px;background:#e9ecf2;border-radius:2px;"></div>
<div style="position:absolute;left:575.30px;top:484.50px;width:11.83px;height:4.10px;background:#00a45a;border-radius:2px;"></div>
<svg style="position:absolute;left:730px;top:438px;overflow:visible" width="22" height="19" viewBox="0 0 22 19"><g transform="translate(0.2 0.6)"><path d="M8.7 0.4 L17 3.8 L8.7 7 L0.4 3.8 Z" fill="#b3b3b3"/><path d="M0.4 4.6 L8.3 7.8 V17.4 L0.4 14 Z" fill="#b3b3b3"/><path d="M9.3 7.8 L17 4.8 V10 M9.3 7.8 V17.2 L13.4 15.6" fill="none" stroke="#b3b3b3" stroke-width="0.9"/><circle cx="17.4" cy="13.7" r="3.2" fill="#b3b3b3" stroke="#fff" stroke-width="0.5"/><rect x="16.2" y="12.5" width="2.4" height="2.4" fill="none" stroke="#e4e4e4" stroke-width="0.5"/></g></svg>
<div style="position:absolute;left:779.00px;top:428.00px;width:193.00px;height:70.00px;background:#fff;border:1px solid #d6d6d6;border-radius:3px;"></div>
<div style="position:absolute;top:437.79px;height:11.62px;line-height:11.62px;font-size:8.3px;color:#333;white-space:nowrap;left:787.30px;letter-spacing:.5px;">应收账款周转率</div>
<div style="position:absolute;top:447.52px;height:11.76px;line-height:11.76px;font-size:8.4px;color:#999;white-space:nowrap;left:787.30px;">receivable turnover</div>
<div style="position:absolute;top:460.82px;height:21.56px;line-height:21.56px;font-size:15.4px;color:#444;white-space:nowrap;font-weight:bold;left:786.90px;">88.07%</div>
<div style="position:absolute;left:787.30px;top:484.50px;width:176.30px;height:4.10px;background:#e9ecf2;border-radius:2px;"></div>
<div style="position:absolute;left:787.30px;top:484.50px;width:155.27px;height:4.10px;background:#00a45a;border-radius:2px;"></div>
<svg style="position:absolute;left:943px;top:437px;overflow:visible" width="22" height="22" viewBox="0 0 22 22"><g transform="translate(0.2 0.1)"><rect x="0" y="0" width="19.8" height="20.2" rx="2.2" fill="#b3b3b3"/><path d="M5.3 3.9 H14.4 V10.3 H16.8 L9.8 17.1 L3.1 10.3 H5.3 Z" fill="#fff"/><path d="M8 6.6 L9.8 9 L11.6 6.6 M9.8 9 V13 M8 10 H11.6 M8 11.6 H11.6" stroke="#b3b3b3" stroke-width="0.7" fill="none"/><circle cx="16.8" cy="16.4" r="4.4" fill="#fff"/><circle cx="16.8" cy="16.4" r="3.6" fill="#b3b3b3"/><circle cx="16.8" cy="16.4" r="2.3" fill="none" stroke="#e6e6e6" stroke-width="0.5"/></g></svg>
<div style="position:absolute;top:503.05px;height:11.9px;line-height:11.9px;font-size:8.5px;color:#444;white-space:nowrap;left:141.00px;">当前账套: sample2020 - 演示账套</div>
<div style="position:absolute;top:503.19px;height:11.62px;line-height:11.62px;font-size:8.3px;color:#444;white-space:nowrap;right:149.20px;text-align:right;letter-spacing:.25px;">进销存期间: 2021年09月</div>
<div style="position:absolute;top:503.19px;height:11.62px;line-height:11.62px;font-size:8.3px;color:#444;white-space:nowrap;right:28.00px;text-align:right;letter-spacing:.3px;">会计期间: 2021年09月</div>
<div style="position:absolute;left:0.00px;top:525.00px;width:1000.00px;height:2.00px;background:#3a3a3a;"></div>
</body></html>
